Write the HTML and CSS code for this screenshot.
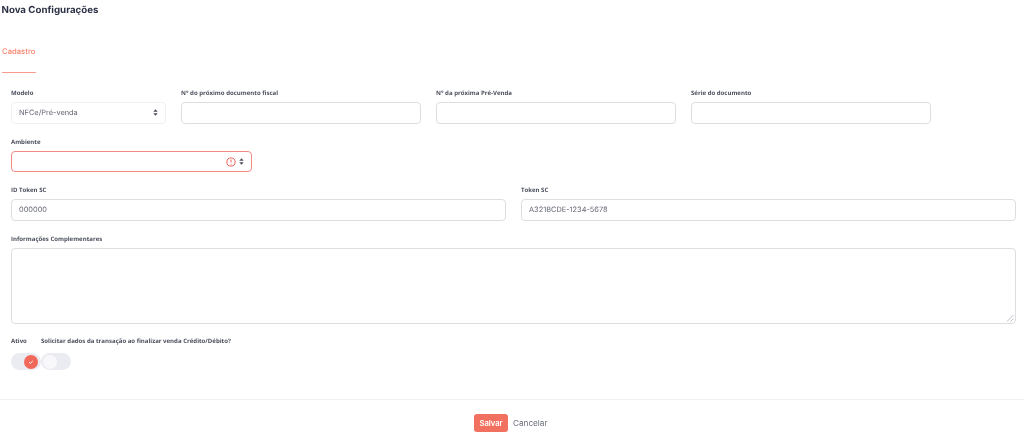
FILE: index.html
```html
<!DOCTYPE html>
<html lang="pt-BR">
<head>
<meta charset="utf-8">
<title>Nova Configurações</title>
<link rel="stylesheet" href="styles.css">
</head>
<body>
<h1 class="title">Nova Configurações</h1>
<nav class="tabs"><a class="tab">Cadastro</a></nav>
<form class="form">
  <div class="row">
    <div class="field w-model"><label class="label">Modelo</label>
      <div class="control select plain"><span class="value">NFCe/Pré-venda</span><svg class="updown" viewBox="0 0 6 8"><path d="M3 0 5.6 3.2H.4zM3 8 .4 4.8h5.2z"/></svg></div></div>
    <div class="field w-third"><label class="label">N° do próximo documento fiscal</label><div class="control"></div></div>
    <div class="field w-third"><label class="label">N° da próxima Pré-Venda</label><div class="control"></div></div>
    <div class="field w-third"><label class="label">Série do documento</label><div class="control"></div></div>
  </div>
  <div class="row">
    <div class="field w-ambient"><label class="label">Ambiente</label>
      <div class="control select invalid">
        <svg class="alert" viewBox="0 0 12 12"><circle cx="6" cy="6" r="4.9"/><path d="M6 3v3.6M6 8.2v1"/></svg>
        <svg class="updown" viewBox="0 0 6 8"><path d="M3 0 5.6 3.2H.4zM3 8 .4 4.8h5.2z"/></svg>
      </div></div>
  </div>
  <div class="row">
    <div class="field grow"><label class="label">ID Token SC</label><div class="control"><span class="value">000000</span></div></div>
    <div class="field grow"><label class="label">Token SC</label><div class="control"><span class="value">A321BCDE-1234-5678</span></div></div>
  </div>
  <div class="row">
    <div class="field grow"><label class="label">Informações Complementares</label>
      <div class="control textarea"><svg class="resize" viewBox="0 0 8 8"><path d="M7.5 1 1 7.5M7.5 4.5 4.5 7.5"/></svg></div></div>
  </div>
  <div class="switches">
    <div class="switch-field"><span class="label">Ativo</span>
      <span class="switch on"><span class="knob"><svg class="check" viewBox="0 0 8 8"><path d="M2.2 4.2 3.4 5.3 5.8 3"/></svg></span></span></div>
    <div class="switch-field"><span class="label">Solicitar dados da transação ao finalizar venda Crédito/Débito?</span>
      <span class="switch"><span class="knob"></span></span></div>
  </div>
</form>
<footer class="footer">
  <button type="button" class="btn-save">Salvar</button>
  <button type="button" class="btn-cancel">Cancelar</button>
</footer>
</body>
</html>
```
FILE: styles.css
```css
* { box-sizing: border-box; }
html, body { margin: 0; height: 442px; overflow: hidden; background: #fff; }
body { font-family: "Inter", "Open Sans", sans-serif; color: #3f4254; text-rendering: geometricPrecision; will-change: transform; }
.title { margin: 0; padding: 5px 0 0 1.5px; height: 15px; font-size: 9.7px; line-height: 12px; font-weight: 700; color: #2b3045; }
.tabs { padding: 26px 0 0 2px; height: 58px; }
.tab { display: block; width: 34px; height: 32px; border-bottom: 1px solid #f59a8d; color: #f8806d; font-size: 7.7px; font-weight: 500; line-height: 21px; white-space: nowrap; }
.form { padding: 14px 8px 0 11px; }
.row { display: flex; gap: 15px; margin-bottom: 12.5px; }
.row:nth-child(2), .row:nth-child(3) { margin-bottom: 12px; }
.field { display: flex; flex-direction: column; }
.w-model { width: 155px; }
.w-third { width: 240px; }
.w-ambient { width: 241px; }
.grow { flex: 1 1 0; }
.label { display: block; height: 11px; font-family: "Open Sans", sans-serif; font-size: 6.05px; line-height: 12px; font-weight: 700; color: #4b4f5c; white-space: nowrap; margin-bottom: 4px; }
.control { display: flex; align-items: center; height: 21.5px; padding: 0 7px; background: #fff; border: 1px solid #dcdee2; border-radius: 4px; position: relative; }
.value { font-size: 7.4px; color: #636673; }
.select { justify-content: space-between; }
.select.plain { border-color: #f0f1f4; }
.select.invalid { border-color: #f58a84; justify-content: flex-end; gap: 3px; height: 21px; }
.updown { width: 5px; height: 7px; fill: #4a4d58; }
.alert { width: 10px; height: 10px; fill: none; stroke: #f0534f; stroke-width: 1.1; }
.textarea { height: 76px; }
.resize { position: absolute; right: 1px; bottom: 1px; width: 8px; height: 8px; fill: none; stroke: #a9abb2; stroke-width: .8; }
.switches { display: flex; gap: 15px; margin-top: 4px; }
.switch-field { display: flex; flex-direction: column; }
.switch-field .label { margin-bottom: 2px; height: 15px; line-height: 11px; }
.switch { display: flex; align-items: center; width: 30px; height: 17px; background: #ebecf2; border-radius: 9px; }
.switch-field:first-child { width: 15px; }
.switch.on { justify-content: flex-end; }
.knob { display: flex; align-items: center; justify-content: center; width: 14px; height: 14px; margin: 0 1.5px; border-radius: 50%; background: #f8f8fb; }
.switch.on .knob { background: #f1685a; margin-right: 3px; }
.check { width: 8px; height: 8px; fill: none; stroke: #fff; stroke-width: 1; }
.footer { display: flex; justify-content: center; gap: 5px; margin-top: 29px; padding: 14px 3px 0 0; border-top: 1px solid #f1f2f5; height: 42px; }
.btn-save, .btn-cancel { font-family: inherit; font-size: 7.6px; height: 18px; border: 0; padding: 0; border-radius: 3px; }
.btn-save { width: 34px; background: #f2705f; color: #fff; font-weight: 600; }
.btn-cancel { width: 34px; font-size: 8.2px; background: transparent; color: #6a6d7a; white-space: nowrap; }
```
